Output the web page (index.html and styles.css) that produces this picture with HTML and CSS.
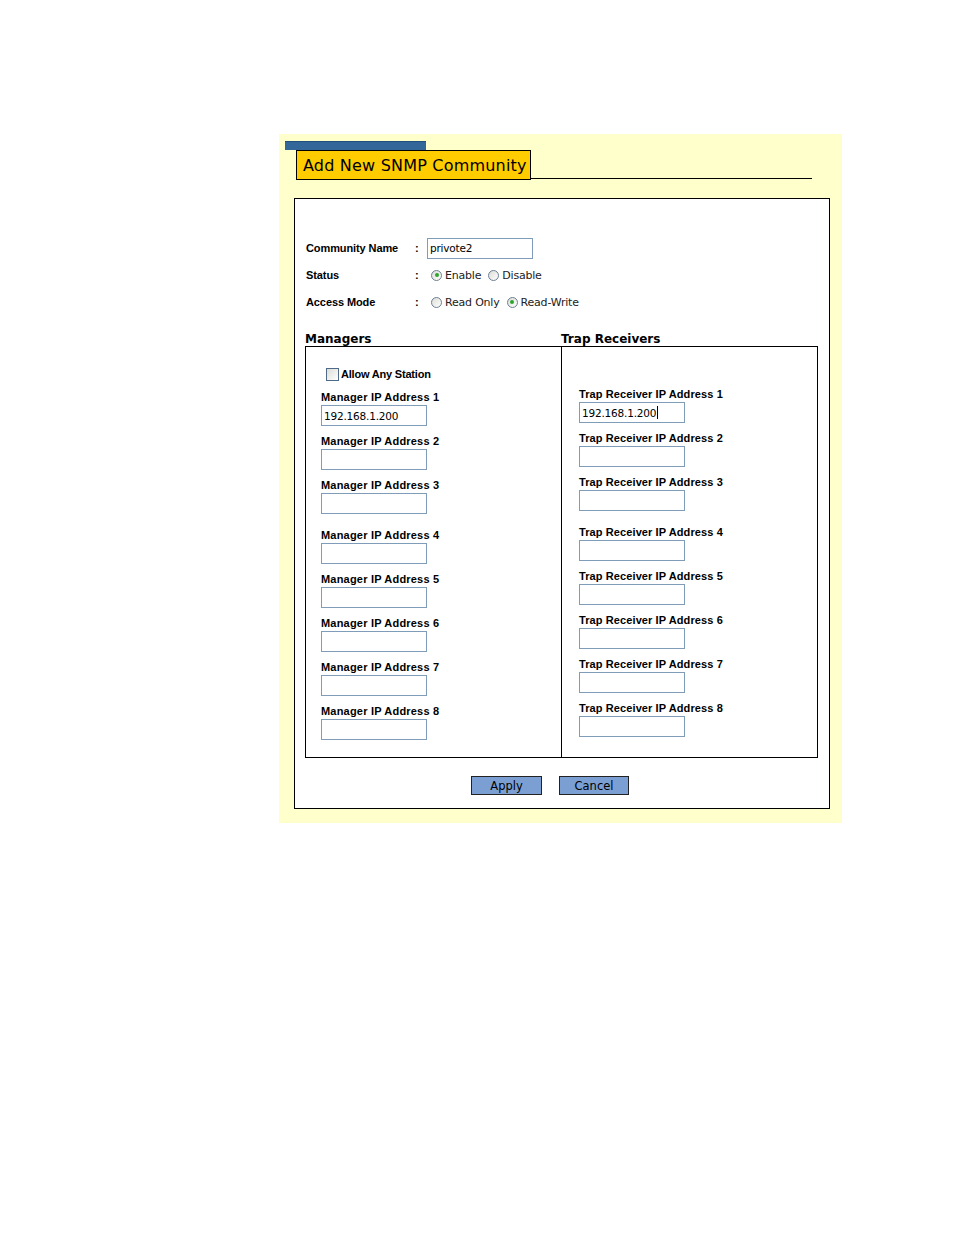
FILE: index.html
```html
<!DOCTYPE html>
<html lang="en">
<head>
    <meta charset="UTF-8">
    <title>Add New SNMP Community</title>
    <link rel="stylesheet" href="styles.css">
</head>
<body>
    <div class="panel">
        <div class="tab-bar"></div>
        <div class="title-row">
            <div class="title">Add New SNMP Community</div>
            <div class="title-line"></div>
        </div>

        <div class="form-box">
            <div class="settings">
                <span class="label">Community Name</span>
                <span class="colon">:</span>
                <span class="value"><input class="text-input" type="text" value="privote2"></span>

                <span class="label">Status</span>
                <span class="colon">:</span>
                <span class="value">
                    <span class="radio checked"></span><span class="opt">Enable</span>
                    <span class="radio"></span><span class="opt">Disable</span>
                </span>

                <span class="label">Access Mode</span>
                <span class="colon">:</span>
                <span class="value">
                    <span class="radio"></span><span class="opt">Read Only</span>
                    <span class="radio checked"></span><span class="opt">Read-Write</span>
                </span>
            </div>

            <div class="section-heads">
                <span>Managers</span>
                <span>Trap Receivers</span>
            </div>
            <div class="sections">
                <div class="col managers">
                    <div class="allow"><span class="checkbox"></span>Allow Any Station</div>
                    <div class="field"><span class="field-label">Manager IP Address 1</span><input class="text-input" type="text" value="192.168.1.200"></div>
                    <div class="field"><span class="field-label">Manager IP Address 2</span><input class="text-input" type="text"></div>
                    <div class="field"><span class="field-label">Manager IP Address 3</span><input class="text-input" type="text"></div>
                    <div class="field spaced"><span class="field-label">Manager IP Address 4</span><input class="text-input" type="text"></div>
                    <div class="field"><span class="field-label">Manager IP Address 5</span><input class="text-input" type="text"></div>
                    <div class="field"><span class="field-label">Manager IP Address 6</span><input class="text-input" type="text"></div>
                    <div class="field"><span class="field-label">Manager IP Address 7</span><input class="text-input" type="text"></div>
                    <div class="field"><span class="field-label">Manager IP Address 8</span><input class="text-input" type="text"></div>
                </div>
                <div class="col receivers">
                    <div class="field"><span class="field-label">Trap Receiver IP Address 1</span><span class="input-wrap"><input class="text-input" type="text" value="192.168.1.200"><span class="caret"></span></span></div>
                    <div class="field"><span class="field-label">Trap Receiver IP Address 2</span><input class="text-input" type="text"></div>
                    <div class="field"><span class="field-label">Trap Receiver IP Address 3</span><input class="text-input" type="text"></div>
                    <div class="field spaced"><span class="field-label">Trap Receiver IP Address 4</span><input class="text-input" type="text"></div>
                    <div class="field"><span class="field-label">Trap Receiver IP Address 5</span><input class="text-input" type="text"></div>
                    <div class="field"><span class="field-label">Trap Receiver IP Address 6</span><input class="text-input" type="text"></div>
                    <div class="field"><span class="field-label">Trap Receiver IP Address 7</span><input class="text-input" type="text"></div>
                    <div class="field"><span class="field-label">Trap Receiver IP Address 8</span><input class="text-input" type="text"></div>
                </div>
            </div>

            <div class="buttons">
                <button class="btn apply">Apply</button>
                <button class="btn cancel">Cancel</button>
            </div>
        </div>
    </div>
</body>
</html>
```

FILE: styles.css
```css
body {
    margin: 0;
    background: #fff;
    font-family: "Liberation Sans", Arial, sans-serif;
    color: #000;
}

.panel {
    margin: 134px 0 0 279px;
    width: 563px;
    height: 689px;
    box-sizing: border-box;
    padding: 7px 0 0 6px;
    background: #ffffcc;
}

.tab-bar {
    width: 141px;
    height: 9px;
    background: #336699;
    box-sizing: border-box;
    border-top: 1px solid #1f4f7f;
}

.title-row {
    display: flex;
    align-items: flex-end;
    margin-left: 11px;
    width: 516px;
}

.title {
    background: #ffcc00;
    border: 1px solid #000;
    height: 30px;
    box-sizing: border-box;
    padding: 0 3px 0 6px;
    font-family: "DejaVu Sans", Verdana, sans-serif;
    font-size: 16px;
    letter-spacing: 0.2px;
    line-height: 29px;
    white-space: nowrap;
}

.title-line {
    flex: 1;
    border-bottom: 1px solid #000;
    margin-bottom: 1px;
}

.form-box {
    margin: 18px 0 0 9px;
    width: 536px;
    height: 611px;
    box-sizing: border-box;
    border: 1px solid #000;
    background: #fff;
    padding-top: 36px;
}

.settings {
    display: grid;
    grid-template-columns: 109px 12px auto;
    grid-template-rows: 26px 28px 26px;
    align-items: center;
    padding-left: 11px;
}

.label {
    font-weight: bold;
    font-size: 11px;
    letter-spacing: -0.1px;
}

.colon {
    font-weight: bold;
    font-size: 11px;
}

.value {
    display: flex;
    align-items: center;
}

.opt {
    font-family: "DejaVu Sans", Verdana, sans-serif;
    font-size: 11px;
    letter-spacing: -0.2px;
    color: #222;
    margin-right: 3px;
}

.radio {
    width: 11px;
    height: 11px;
    box-sizing: border-box;
    border: 1px solid #6d7f93;
    border-radius: 50%;
    background: linear-gradient(135deg, #dcdcd6, #ffffff);
    margin: 0 3px 0 4px;
    position: relative;
}

.radio.checked::after {
    content: "";
    position: absolute;
    left: 2.5px;
    top: 2.5px;
    width: 4px;
    height: 4px;
    border-radius: 50%;
    background: #2fa52f;
}

.text-input {
    display: block;
    width: 106px;
    height: 21px;
    box-sizing: border-box;
    border: 1px solid #7f9db9;
    padding: 0 2px;
    margin: 0;
    font-family: "DejaVu Sans", Verdana, sans-serif;
    font-size: 10.5px;
    letter-spacing: -0.2px;
    color: #000;
    background: #fff;
}

.text-input:focus {
    outline: none;
}

.input-wrap {
    display: block;
    position: relative;
    width: 106px;
}

.caret {
    position: absolute;
    left: 78px;
    top: 4px;
    width: 1px;
    height: 13px;
    background: #000;
}

.section-heads {
    display: flex;
    margin: 17px 0 0 10px;
    font-family: "DejaVu Sans", Verdana, sans-serif;
    font-weight: bold;
    font-size: 12px;
    line-height: 14px;
}

.section-heads span {
    width: 256px;
}

.sections {
    display: flex;
    margin-left: 10px;
    width: 513px;
    height: 412px;
    box-sizing: border-box;
    border: 1px solid #000;
}

.col {
    display: flex;
    flex-direction: column;
}

.managers {
    width: 256px;
    border-right: 1px solid #000;
    padding: 20px 0 0 15px;
    box-sizing: border-box;
}

.receivers {
    padding: 40px 0 0 17px;
}

.receivers .field-label {
    letter-spacing: 0.1px;
}

.allow {
    display: flex;
    align-items: center;
    font-weight: bold;
    font-size: 11px;
    letter-spacing: -0.2px;
    line-height: 14px;
    margin-bottom: 9px;
    padding-left: 5px;
}

.checkbox {
    width: 13px;
    height: 13px;
    box-sizing: border-box;
    border: 1px solid #4f6a86;
    background: linear-gradient(135deg, #dcdcd6, #ffffff);
    margin-right: 2px;
}

.field {
    margin-bottom: 8px;
}

.field.spaced {
    margin-top: 6px;
}

.field-label {
    display: block;
    font-weight: bold;
    font-size: 11px;
    letter-spacing: 0.2px;
    line-height: 14px;
    margin-bottom: 1px;
}

.buttons {
    display: flex;
    gap: 17px;
    padding: 18px 0 0 176px;
}

.btn {
    height: 19px;
    box-sizing: border-box;
    border: 1px solid #222;
    background: #7b9fd3;
    font-family: "DejaVu Sans", Tahoma, sans-serif;
    font-size: 11.5px;
    color: #000;
    padding: 0;
    line-height: 16px;
}

.apply {
    width: 71px;
}

.cancel {
    width: 70px;
}
```
